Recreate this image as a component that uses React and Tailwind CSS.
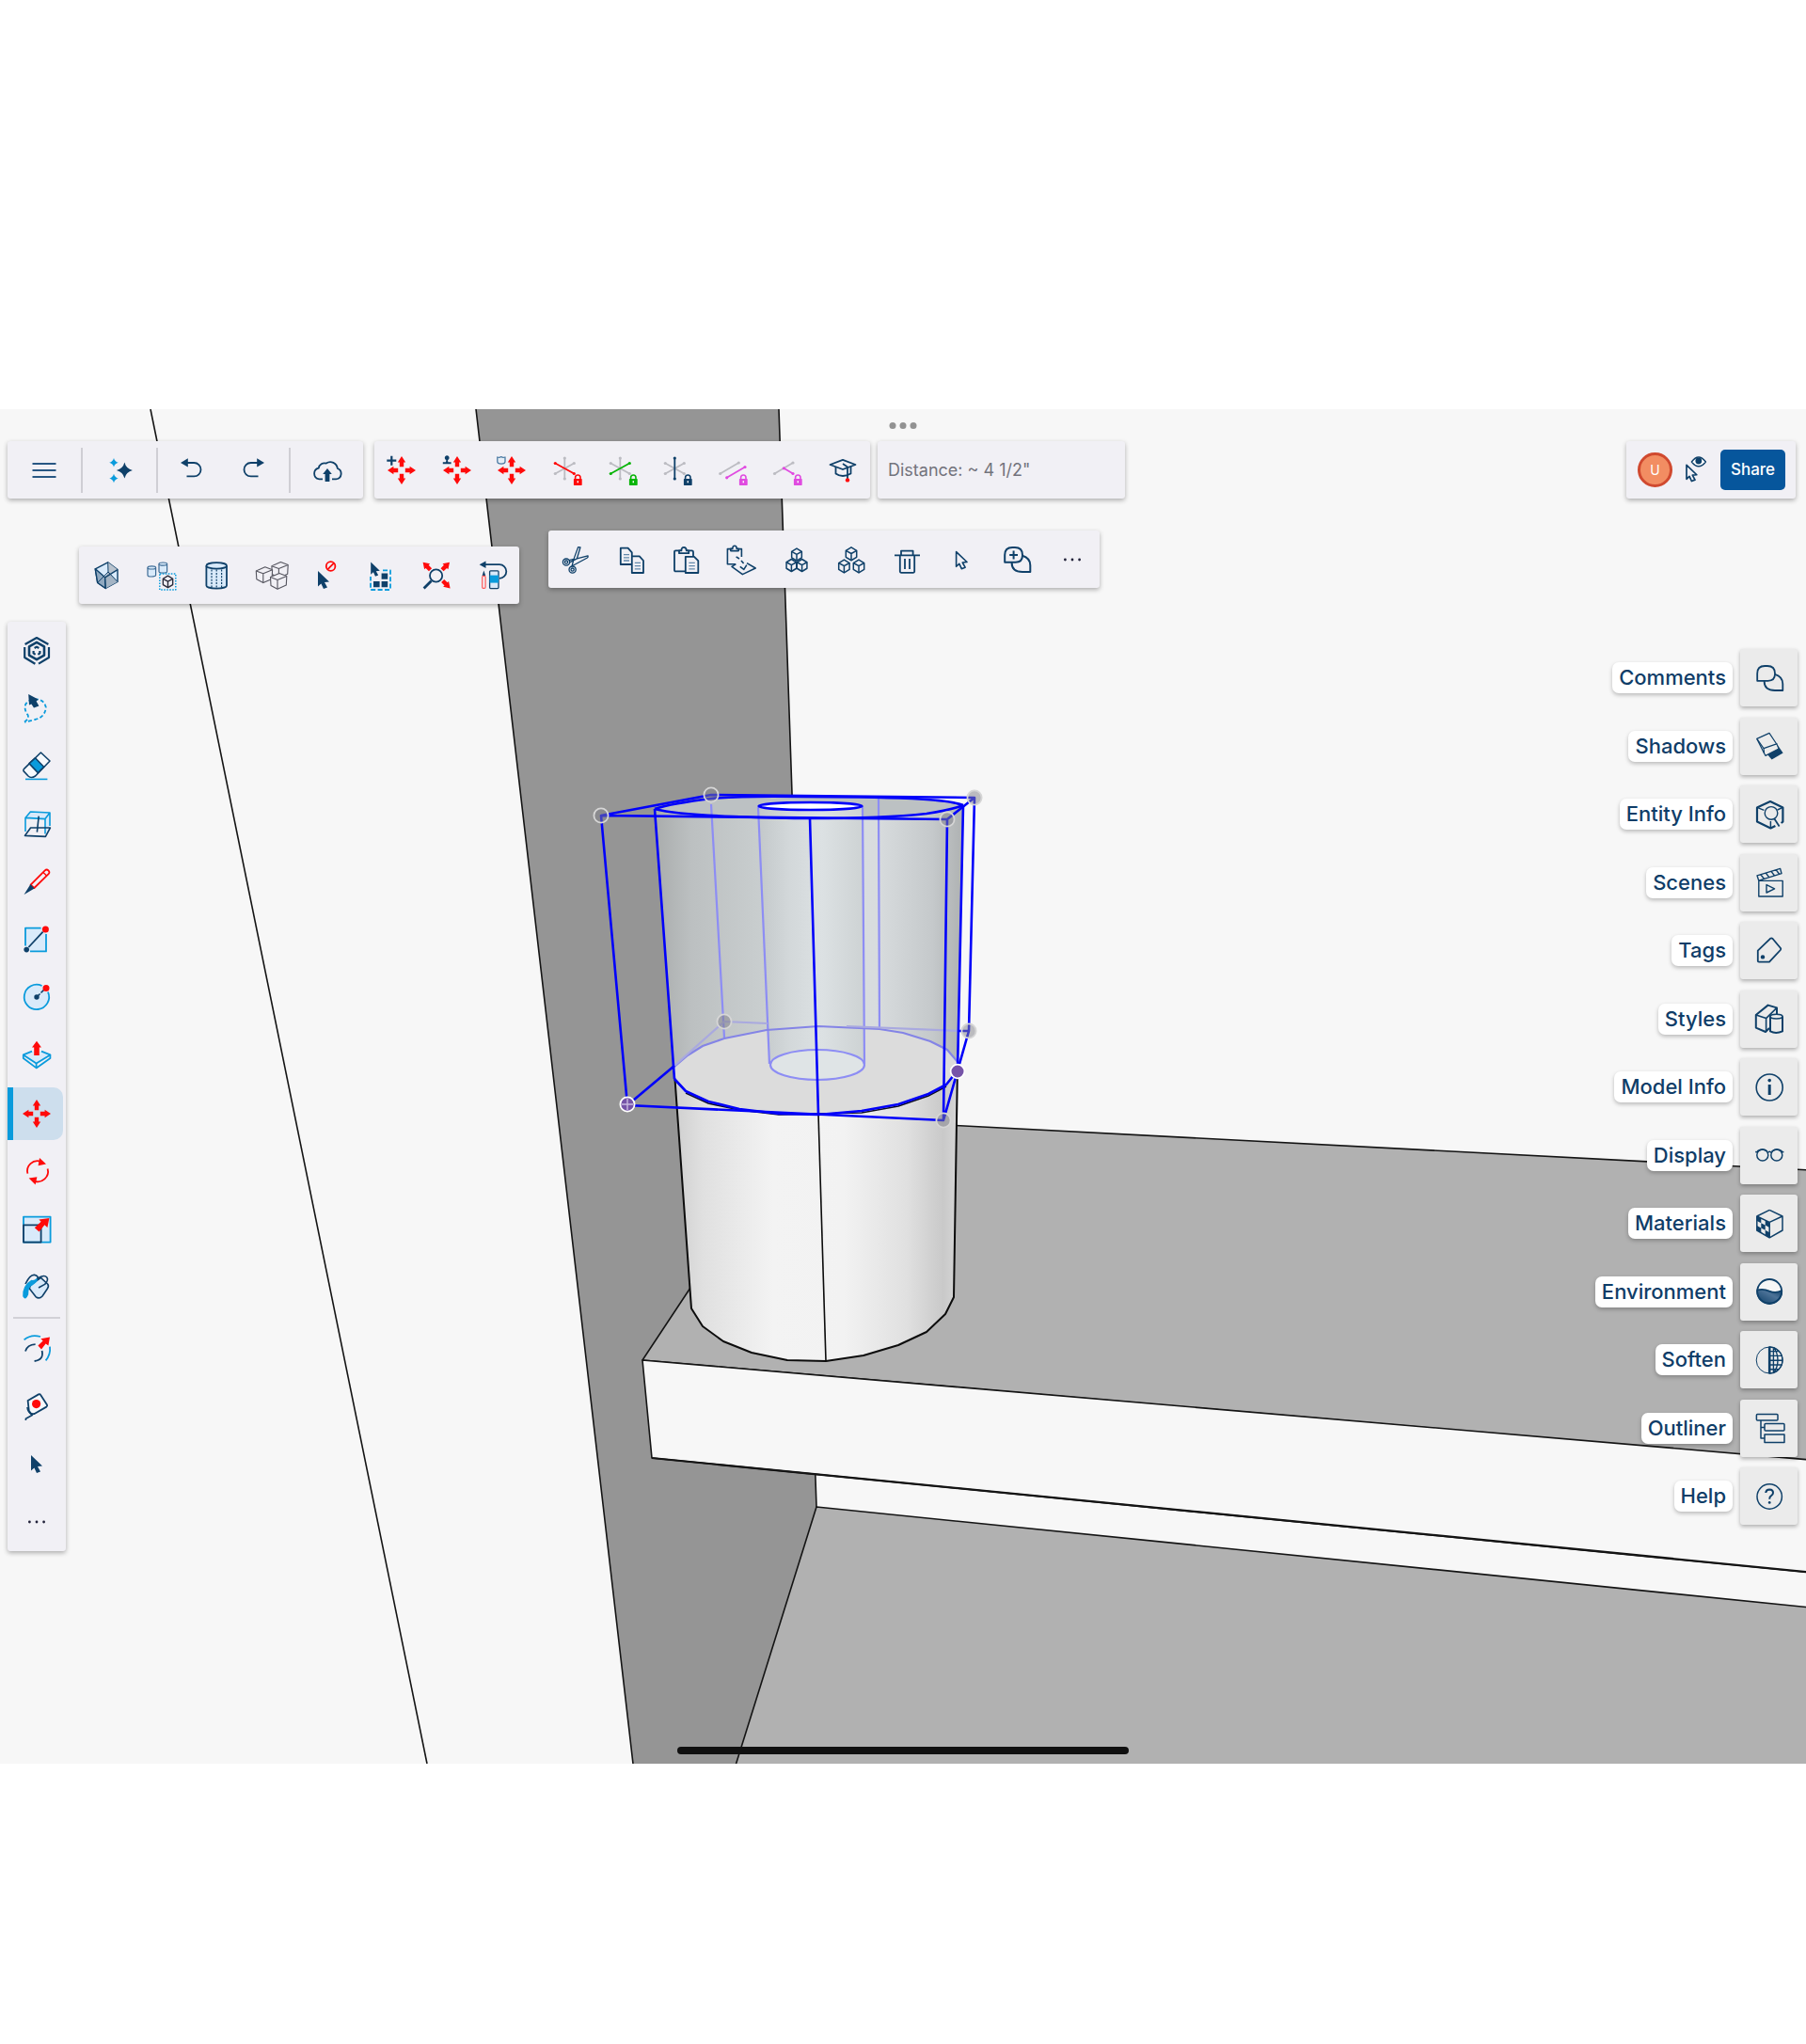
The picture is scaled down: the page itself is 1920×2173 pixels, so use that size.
import React, { useState } from 'react';

const NAVY = '#0f4069';
const BLUE = '#0a9bdc';
const PALE = '#d9eafa';
const RED = '#ff0a0a';
const GREEN = '#08b408';
const PINK = '#e04be0';
const GREY = '#bcbcc2';

function Icon({ children, stroke = NAVY, width = 1.8 }) {
  return (
    <svg
      viewBox="0 0 36 36"
      className="h-9 w-9 shrink-0 overflow-visible"
      fill="none"
      stroke={stroke}
      strokeWidth={width}
      strokeLinejoin="round"
      aria-hidden="true"
    >
      {children}
    </svg>
  );
}

// ---- small shared shapes ----

function Arrow({ x, y, angle, fill = RED }) {
  return (
    <path
      d="M0 0l4.2 6.4h-2v4.8h-4.4v-4.8h-2z"
      transform={`translate(${x} ${y}) rotate(${angle})`}
      fill={fill}
      stroke="none"
    />
  );
}

function MoveArrows() {
  return (
    <g>
      <Arrow x={18} y={3} angle={0} />
      <Arrow x={33} y={18} angle={90} />
      <Arrow x={18} y={33} angle={180} />
      <Arrow x={3} y={18} angle={270} />
    </g>
  );
}

function Star({ x, y, r, fill }) {
  return (
    <path
      d="M0 -1Q.2 -.2 1 0Q.2 .2 0 1Q-.2 .2 -1 0Q-.2 -.2 0 -1z"
      transform={`translate(${x} ${y}) scale(${r})`}
      fill={fill}
      stroke="none"
    />
  );
}

function Lock({ x = 29.3, y = 28.5, color }) {
  return (
    <g transform={`translate(${x} ${y})`}>
      <path d="M-2.7 -1V-2.8a2.7 2.7 0 0 1 5.4 0V-1" stroke={color} strokeWidth="1.6" />
      <rect x="-4.4" y="-1.4" width="8.8" height="6.8" rx=".6" fill={color} stroke="none" />
      <path d="M0 .8v2" stroke="#fff" strokeWidth="1.4" />
    </g>
  );
}

function Axis({ x1, y1, x2, y2, color }) {
  return (
    <g>
      <path d={`M${x1} ${y1}L${x2} ${y2}`} stroke={color} strokeWidth="1.8" />
      <circle cx={x1} cy={y1} r="1.6" fill={color} stroke="none" />
      <circle cx={x2} cy={y2} r="1.6" fill={color} stroke="none" />
    </g>
  );
}

const AXES = {
  red: { x1: 5.3, y1: 10.5, x2: 25.3, y2: 21.5, color: RED },
  green: { x1: 5.3, y1: 21.5, x2: 25.3, y2: 10.5, color: GREEN },
  blue: { x1: 15.3, y1: 5, x2: 15.3, y2: 27, color: NAVY },
};

function AxisLock({ active }) {
  const order = ['red', 'green', 'blue'].filter((a) => a !== active);
  return (
    <Icon>
      {order.map((a) => <Axis key={a} {...AXES[a]} color={GREY} />)}
      <Axis {...AXES[active]} />
      <Lock color={AXES[active].color} />
    </Icon>
  );
}

function Cube({ x, y, r, fill = 'none', stroke = NAVY, width = 1.5 }) {
  return (
    <g transform={`translate(${x} ${y}) scale(${r})`} stroke={stroke} strokeWidth={width / r} fill={fill}>
      <path d="M0 -1.12L.92 -.56V.56L0 1.12L-.92 .56V-.56z" />
      <path d="M-.92 -.56L0 -.05L.92 -.56M0 -.05V1.12" />
    </g>
  );
}

function WireCube({ x, y }) {
  return (
    <g transform={`translate(${x} ${y})`} fill="#f1f0f5" stroke="#55555f" strokeWidth="1.1">
      <path d="M-8.5 -4L1 -8.2L8.8 -5.2L8.3 4.5L-1 8.6L-8 4.8z" />
      <path d="M-8.5 -4L-1 -1.2L8.8 -5.2M-1 -1.2V8.6" />
    </g>
  );
}

function Cylinder({ x, y, w, h, ry, width = 1.2, stroke = '#3c6a94' }) {
  return (
    <g stroke={stroke} strokeWidth={width} fill={PALE}>
      <path d={`M${x} ${y}v${h}a${w / 2} ${ry} 0 0 0 ${w} 0v${-h}`} />
      <ellipse cx={x + w / 2} cy={y} rx={w / 2} ry={ry} />
    </g>
  );
}

function Cursor({ x, y, s = 1, fill = NAVY, width = 0 }) {
  return (
    <path
      d="M0 0L12 11.5L7 12L10 17.5L6 19L3.4 13.4L0 16.5z"
      transform={`translate(${x} ${y}) scale(${s})`}
      fill={fill}
      stroke={width ? NAVY : 'none'}
      strokeWidth={width}
    />
  );
}

function Dots() {
  return (
    <Icon>
      {[10.4, 18, 25.6].map((x) => <circle key={x} cx={x} cy="18" r="1.4" fill="#22223a" stroke="none" />)}
    </Icon>
  );
}

function CommentShapes() {
  return (
    <g>
      <path d="M24 13.8Q32.3 16.4 32.3 24V31H24Q12.6 31 12.6 21" />
      <path d="M5.2 20.8V13Q5.2 5 13.2 5H16Q24 5 24 13V13.6Q24 20.8 16.6 20.8z" />
    </g>
  );
}

// ---- toolbars ----

const fileTools = [
  { label: 'Menu', className: 'w-[78px]', icon: <Icon stroke="#285783" width={2}><path d="M5.5 11H30.5M5.5 18H30.5M5.5 25H30.5" /></Icon> },
  {
    label: 'Assistant',
    className: 'w-[80px] border-l-2',
    icon: (
      <Icon>
        <Star x={23.4} y={18} r={8.5} fill={NAVY} />
        <Star x={12} y={9.8} r={4.8} fill={BLUE} />
        <Star x={12} y={26.5} r={4.8} fill={BLUE} />
      </Icon>
    ),
  },
  {
    label: 'Undo',
    className: 'w-[71px] border-l-2',
    icon: (
      <Icon>
        <path d="M7 10L14.8 5.2V14.6z" fill={NAVY} stroke="none" />
        <path d="M14 10H21.3a7.2 7.2 0 0 1 0 14.4H13.5" />
      </Icon>
    ),
  },
  {
    label: 'Redo',
    className: 'w-[70px] pr-1',
    icon: (
      <Icon>
        <path d="M29 10L21.2 5.2V14.6z" fill={NAVY} stroke="none" />
        <path d="M22 10H14.7a7.2 7.2 0 0 0 0 14.4H22.5" />
      </Icon>
    ),
  },
  {
    label: 'Save to cloud',
    className: 'w-[79px] border-l-2',
    icon: (
      <Icon>
        <path d="M13 27.4H9.4A6 6 0 0 1 8.8 15.6A6.3 6.3 0 0 1 16.8 10.6A7.6 7.6 0 0 1 28.8 16A5.9 5.9 0 0 1 27.2 27.4H23" />
        <path d="M18 16l4.8 6h-2.4v8h-4.8v-8H13.2z" fill={NAVY} stroke="none" />
      </Icon>
    ),
  },
];

const moveTools = [
  { label: 'Move copy', icon: <Icon><MoveArrows /><path d="M7.3 2.7V12.7M2.3 7.7H12.3" strokeWidth="2.2" /></Icon> },
  {
    label: 'Stamp copies',
    icon: (
      <Icon>
        <MoveArrows />
        <path d="M2.8 9.3h8.8v2H2.8zM6 9.6L6.4 7A2.4 2.4 0 1 1 8 7l.4 2.6z" fill={NAVY} stroke="none" />
      </Icon>
    ),
  },
  {
    label: 'Move shape',
    icon: (
      <Icon>
        <MoveArrows />
        <path d="M2.8 4Q5 5 6.8 3.6Q8.6 5 11 4V8.5Q11 11 6.9 11.2Q2.8 11 2.8 8.5z" fill="#e6eef6" stroke="#4b7aa3" strokeWidth="1.3" />
      </Icon>
    ),
  },
  { label: 'Lock red axis', icon: <AxisLock active="red" /> },
  { label: 'Lock green axis', icon: <AxisLock active="green" /> },
  { label: 'Lock blue axis', icon: <AxisLock active="blue" /> },
  {
    label: 'Lock parallel',
    icon: (
      <Icon>
        <Axis x1={4.7} y1={21.5} x2={24.3} y2={10} color={GREY} />
        <Axis x1={11.7} y1={25.8} x2={31} y2={14.5} color={PINK} />
        <Lock color={PINK} />
      </Icon>
    ),
  },
  {
    label: 'Lock perpendicular',
    icon: (
      <Icon>
        <Axis x1={4.5} y1={21.5} x2={24} y2={10} color={GREY} />
        <Axis x1={14.3} y1={15.8} x2={24} y2={21.5} color={PINK} />
        <Lock color={PINK} />
      </Icon>
    ),
  },
  {
    label: 'Learn',
    icon: (
      <Icon>
        <path d="M10.5 14V21.5Q14 24 18 24Q22 24 26.5 21.5V14" />
        <path d="M4.5 12L18 6.8L31.5 12L18 17z" fill="#f1f0f5" />
        <path d="M18 11L23 14.4V27" />
        <circle cx="23" cy="28.4" r="2.2" fill={RED} stroke="none" />
      </Icon>
    ),
  },
];

const viewTools = [
  {
    label: 'X-ray',
    icon: (
      <Icon width={1.4}>
        <path d="M6.3 10.8L19.7 3.8L30 11.6V24.5L17.3 31.5L8.7 25.5z" fill={PALE} />
        <path d="M6.3 10.8L16.7 19.8L17.3 31.5L8.7 25.5z" fill="#90a8bf" />
        <path d="M19.7 3.8L30 11.6L16.7 19.8L20 14z" fill="#b9c3ce" stroke="none" />
        <path d="M20 14L30 24.5L17.3 31.5L16.8 21z" fill="#a4b4c4" stroke="none" />
        <path d="M16.7 19.8L30 11.6M16.7 19.8L17.3 31.5" />
        <path d="M19.7 3.8L20 14M20 14L30 24.5M20 14L8.7 25.5" strokeWidth="1" />
      </Icon>
    ),
  },
  {
    label: 'Select similar',
    icon: (
      <Icon>
        <Cylinder x={3} y={9.4} w={8.6} h={8} ry={1.6} />
        <Cylinder x={15} y={5.6} w={8.6} h={8} ry={1.6} />
        <rect x="15.8" y="16" width="17" height="17" stroke={BLUE} strokeDasharray="1.6 1.4" strokeWidth="1.5" />
        <Cube x={24.5} y={24.4} r={5.6} stroke="#2a2a3a" width={1.4} fill="#f1f0f5" />
      </Icon>
    ),
  },
  {
    label: 'Hidden geometry',
    icon: (
      <Icon>
        <Cylinder x={7.4} y={7.4} w={21.6} h={21} ry={3.2} width={1.8} stroke={NAVY} />
        <path d="M13 11.5V31M18.2 11.5V31M23.6 11.5V31" strokeWidth="1.2" strokeDasharray="2 1.4" />
      </Icon>
    ),
  },
  {
    label: 'Hide rest of model',
    icon: (
      <Icon>
        <WireCube x={26.4} y={11.8} />
        <WireCube x={9.8} y={17} />
        <WireCube x={25} y={23.6} />
      </Icon>
    ),
  },
  {
    label: 'Deselect',
    icon: (
      <Icon>
        <Cursor x={9} y={13} />
        <circle cx="22.6" cy="8" r="4.8" stroke={RED} strokeWidth="1.8" />
        <path d="M19.3 11.3L26 4.7" stroke={RED} />
      </Icon>
    ),
  },
  {
    label: 'Select all',
    icon: (
      <Icon>
        <path d="M19 12.4H27V33H6V19" stroke={BLUE} strokeWidth="1.8" strokeDasharray="5 2.4" />
        <path d="M17.6 15.6h6.6v6.2h-6.6zM9 24h6.6v6.2H9zM17.6 24h6.6v6.2h-6.6z" fill={NAVY} stroke="none" />
        <Cursor x={6.2} y={3.6} s={0.8} />
      </Icon>
    ),
  },
  {
    label: 'Zoom extents',
    icon: (
      <Icon>
        <circle cx="17.6" cy="18" r="6.6" />
        <path d="M12.6 23.4L4.6 31.5" strokeWidth="2.8" />
        <Arrow x={3.6} y={3.8} angle={-45} />
        <Arrow x={32} y={3.8} angle={45} />
        <Arrow x={32.6} y={31.4} angle={135} />
      </Icon>
    ),
  },
  {
    label: 'Undo draw',
    icon: (
      <Icon>
        <path d="M4.6 6.2L11.5 2.4V10z" fill={NAVY} stroke="none" />
        <path d="M10 6.2H26a7.3 7.3 0 0 1 0 14.6" />
        <path d="M9.4 12.5L7.6 18H11.2z" fill={NAVY} stroke="none" />
        <rect x="7.7" y="18.4" width="3.4" height="13" rx="1.2" stroke="#ff5a5a" strokeWidth="1.2" />
        <rect x="15.6" y="12.8" width="9.4" height="18.8" rx="1" fill={PALE} strokeWidth="1.3" />
        <path d="M15.6 17.6h9.4v8h-9.4z" fill={BLUE} stroke="none" />
      </Icon>
    ),
  },
];

const editTools = [
  {
    label: 'Cut',
    icon: (
      <Icon width={1.3}>
        <circle cx="8" cy="20.6" r="3.6" />
        <circle cx="14.6" cy="28.6" r="3.6" />
        <circle cx="8" cy="20.6" r="1.6" />
        <circle cx="14.6" cy="28.6" r="1.6" />
        <path d="M11 18.6L16 17.4L20.6 4.6L23 4.8L19.4 16.8L31 13.8Q31.6 15.4 30.4 16L14.2 24.8M11.6 20.8L19.4 16.8M14 25L16 17.4" />
      </Icon>
    ),
  },
  {
    label: 'Copy',
    icon: (
      <Icon>
        <path d="M18 23H6.8V5.7H14.6L18.8 10.4V14" />
        <path d="M18.8 14.4H26.8L31 19V32H18.8z" />
        <path d="M10 12.6H16M10 15.8H16M10 19H16M21.8 21.4H28M21.8 24.6H28M21.8 27.8H28" stroke="#6389ac" strokeWidth="1.3" />
      </Icon>
    ),
  },
  {
    label: 'Paste',
    icon: (
      <Icon>
        <path d="M17 30.4H7.4Q6 30.4 6 29V9.8Q6 8.4 7.4 8.4H24.4Q26 8.4 26 9.8V14" />
        <path d="M11 11.2V8.4H13.4Q13.4 4.8 16 4.8Q18.8 4.8 18.8 8.4H21.2V11.2z" fill="#f1f0f5" />
        <path d="M17.8 14.8H27L31.3 19.2V32H17.8z" />
        <path d="M21.4 21.4H27.8M21.4 24.6H27.8M21.4 27.8H27.8" stroke="#6389ac" strokeWidth="1.3" />
      </Icon>
    ),
  },
  {
    label: 'Paste in place',
    icon: (
      <Icon width={1.6}>
        <path d="M12 22.8H3.4V6.6H18.4V15" />
        <path d="M6.8 8.6V6.4H8.8Q8.8 3.2 11 3.2Q13.2 3.2 13.2 6.4H15.2V8.6z" fill="#f1f0f5" />
        <path d="M12.4 22.6L8 25.4L19.4 33.6L33.2 27L24 21.6" />
        <path d="M12.6 14.8L16 17M18 19L20.6 22M16.8 25.4L20.8 28.4L23.8 23.6" />
      </Icon>
    ),
  },
  { label: 'Make group', icon: <Icon><Cube x={18} y={12.6} r={5.8} /><Cube x={12.4} y={24} r={5.8} /><Cube x={23.6} y={24} r={5.8} /></Icon> },
  { label: 'Explode', icon: <Icon><Cube x={18} y={11.8} r={6.2} /><Cube x={10.4} y={25} r={6.2} /><Cube x={26} y={25} r={6.2} /></Icon> },
  {
    label: 'Delete',
    icon: (
      <Icon>
        <path d="M5 13.4H32M12 13V8.6H24.6V13M10.8 13.6V30.6Q10.8 31.8 12 31.8H25Q26.2 31.8 26.2 30.6V13.6M16 17V28M21 17V28" />
      </Icon>
    ),
  },
  { label: 'Select', icon: <Icon><Cursor x={12.6} y={9.6} s={0.95} fill="none" width={1.7} /></Icon> },
  { label: 'Add comment', icon: <Icon width={2}><CommentShapes /><path d="M14.6 8.6V17.4M10.2 13H19" /></Icon> },
  { label: 'More edit tools', icon: <Dots /> },
];

const drawTools = [
  {
    label: 'Home',
    icon: (
      <Icon>
        <path d="M5.6 11L18 4L30.4 11M31 14V25L20 31.6M16.4 31.8L5.2 25V14" strokeWidth="2.2" />
        <path d="M18 8.8L26 13.4V22.6L18 27.2L10 22.6V13.4z" strokeWidth="2.6" />
        <path d="M15.6 15L18 13.6L20.4 15M14.6 18V20.4L16.6 21.8M21.4 18V20.4L19.4 21.8" strokeWidth="2.2" />
      </Icon>
    ),
  },
  {
    label: 'Lasso',
    icon: (
      <Icon>
        <path d="M5 32.6Q10 29 8.6 25Q4 19 6.4 13.4Q10 8.4 17 8.4Q26 8.6 27.8 17Q27 27.6 16 30Q10 31.6 5 32.6" stroke={BLUE} strokeDasharray="4 2.4" />
        <path d="M9.2 3L19.6 8.4L17.6 10.4L20.4 15.6L15 17.6L12.4 13.4L10 14.6z" fill={NAVY} stroke="none" />
      </Icon>
    ),
  },
  {
    label: 'Eraser',
    icon: (
      <Icon width={1.6}>
        <path d="M22.4 3L32 12L16.6 28Q12 31 9 28L4 22.6Q3.6 21 4.6 20.4z" fill="#f5f9fd" />
        <path d="M10 14.6L16.4 8.8L25.6 18.2L19.4 24.6z" fill={BLUE} />
        <path d="M6 31.4H29.4" stroke={BLUE} />
      </Icon>
    ),
  },
  {
    label: 'Section plane',
    icon: (
      <Icon width={1.6}>
        <path d="M6 11.4L11.4 5L32 6V19L27 28V12.6z" fill={PALE} stroke="none" />
        <path d="M6 26V11.4L27 12.6V28.4M6 11.4L11.4 5L32 6L27 12.6M32 6V20" stroke={BLUE} />
        <path d="M5.4 30.4L11.6 22H32.4L27.4 31.4zM18.4 26.6L20.2 9.6" />
      </Icon>
    ),
  },
  {
    label: 'Line',
    icon: (
      <Icon>
        <path d="M11.6 20.6L26.8 5.4Q28.6 3.6 30.4 5.4Q32.4 7.4 30.6 9.2L15.4 24z" stroke={RED} />
        <path d="M25 7.4L28.6 11" stroke={RED} strokeWidth="1.4" />
        <path d="M4.6 31L11.4 20L15.6 24.4z" fill={NAVY} stroke="none" />
      </Icon>
    ),
  },
  {
    label: 'Rectangle',
    icon: (
      <Icon>
        <path d="M6 5.6H28V30.4H6z" fill={PALE} stroke="none" />
        <path d="M22.6 5.6H6V24.6M28 12V30.4H11" stroke={BLUE} />
        <path d="M9.4 26L24.6 9.6" />
        <circle cx="7.2" cy="28.6" r="2.8" fill={NAVY} stroke="none" />
        <circle cx="27.4" cy="7" r="3.5" fill={RED} stroke="none" />
      </Icon>
    ),
  },
  {
    label: 'Circle',
    icon: (
      <Icon>
        <circle cx="18" cy="17" r="13.2" fill={PALE} stroke="none" />
        <path d="M23.6 5A13.2 13.2 0 1 0 30 11.6" stroke={BLUE} />
        <path d="M18 17L25.6 9.4" strokeDasharray="5 1.4" strokeWidth="1.5" />
        <circle cx="18" cy="17" r="2.7" fill={NAVY} stroke="none" />
        <circle cx="28" cy="7.4" r="3.5" fill={RED} stroke="none" />
      </Icon>
    ),
  },
  {
    label: 'Push/Pull',
    icon: (
      <Icon>
        <path d="M13 13.6L3.8 17.4L17.6 26.6L32.4 17.4L23 13.6" fill={PALE} stroke={BLUE} />
        <path d="M3.8 17.4V21L17.6 31.4L32.4 21V17.4M17.6 26.6V31" stroke={BLUE} />
        <path d="M18 2.8L23 9.4H20.8V18H15.2V9.4H13z" fill={RED} stroke="none" />
      </Icon>
    ),
  },
  { label: 'Move', icon: <Icon><MoveArrows /></Icon> },
  {
    label: 'Rotate',
    icon: (
      <Icon>
        <path d="M8.4 20.6A10.8 10.8 0 0 1 22 7.6M29.6 15.6A10.8 10.8 0 0 1 15.4 28.6" stroke={RED} strokeWidth="1.8" />
        <path d="M21 4L28 10.6L19.6 12.2zM16.6 32.4L9.6 25.6L18.4 24.2z" fill={RED} stroke="none" />
      </Icon>
    ),
  },
  {
    label: 'Scale',
    icon: (
      <Icon>
        <path d="M4 4.6H32.6V31.6H4z" stroke={BLUE} fill={PALE} />
        <path d="M4 13.4H22.6V31.6H4z" />
        <path d="M31.4 6L29.4 16L26.4 13.2L20.6 20.6L15.8 16.2L22.6 9.8L20.4 7.6z" fill={RED} stroke="none" />
      </Icon>
    ),
  },
  {
    label: 'Paint bucket',
    icon: (
      <Icon width={1.6}>
        <path d="M14.4 14L22.4 8.4L29.6 15Q31.4 17 29.4 20L24 28Q20.6 31.6 17 28.6L10.4 20Q10.6 16 14.4 14z" fill={PALE} />
        <path d="M13.6 15.4Q8 17 8.4 26Q6 32 4 28Q3.4 17 12.4 11.6Q16 12.4 18.4 9.4Q18.4 12 13.6 15.4z" fill={BLUE} stroke={BLUE} />
        <path d="M6 15Q11 4.8 15.6 5.4Q20 6 19.4 10.6M18.4 9.4Q26 4.4 28.8 8Q31 11 26.6 15.4L20 19" />
      </Icon>
    ),
  },
];

const moreTools = [
  {
    label: 'Offset',
    icon: (
      <Icon>
        <path d="M4.6 8.4Q12 2 22 5M32 15.6Q33 24 27.6 30.4" stroke={BLUE} />
        <path d="M6 20.6Q8 13.6 16.6 13.2M23.6 20Q26 29.6 15.6 31" />
        <path d="M32 5.4L30.4 14.6L27.6 12.4L23 18.6L19.4 14.6L24.6 9.6L22.4 7.2z" fill={RED} stroke="none" />
      </Icon>
    ),
  },
  {
    label: 'Tape measure',
    icon: (
      <Icon>
        <path d="M8.6 12L20 5.4Q21.4 4.6 22.2 6L29 16.4Q29.6 17.8 28.4 18.6L15.6 26Q11.4 26.6 9.8 22.8z" fill="#f6f8fb" />
        <path d="M8 19Q8.4 24 13 27.2M14 27L6.4 31.2V33" strokeWidth="1.6" />
        <circle cx="17.6" cy="15.6" r="4.6" fill={RED} stroke="none" />
      </Icon>
    ),
  },
  { label: 'Select', icon: <Icon><Cursor x={12} y={8} /></Icon> },
  { label: 'More tools', icon: <Dots /> },
];

const panels = [
  { label: 'Comments', icon: <Icon><CommentShapes /></Icon> },
  {
    label: 'Shadows',
    icon: (
      <Icon width={1.2}>
        <path d="M14.6 25.4L27.4 18L32.6 25.4L20.6 32.4z" fill={NAVY} stroke="none" />
        <path d="M4.8 10.4L18 4.4L26.4 17L28 21L14 28.4L12.6 26z" fill="#ececec" />
        <path d="M12.6 26L12 20.6L26.4 15.6M4.8 10.4L12 20.6" />
      </Icon>
    ),
  },
  {
    label: 'Entity Info',
    icon: (
      <Icon width={2.2}>
        <path d="M30.6 27L32.4 25.6V10.4L19 4L5 10.4V25.4L19.4 32.4L24.4 30" />
        <path d="M5 10.4L12.4 13.4M32.4 10.4L26.6 13M19.4 32.4V25" strokeWidth="1.5" />
        <circle cx="20" cy="16.4" r="6.8" fill="#ebebeb" strokeWidth="1.4" />
        <path d="M23.4 22.6L28.6 30.4" strokeWidth="1.8" />
      </Icon>
    ),
  },
  {
    label: 'Scenes',
    icon: (
      <Icon width={1.4}>
        <path d="M6.8 16.4H32.2V33H6.8zM6.8 16.4L5 10.8L29.6 3.4L31 8.6L6.8 16.2M9 10L12.4 14.2M14.4 8.2L17.8 12.6M20 6.4L23.4 10.8M25.2 4.8L28.6 9.2M15 20.6V29L23.6 24.8z" />
      </Icon>
    ),
  },
  {
    label: 'Tags',
    icon: (
      <Icon>
        <path d="M5.8 17.6L19 4.8Q20.4 3.8 21.6 5L30 15Q30.6 16 29.8 17L18 29.6H7Q5.8 29.6 5.8 28.4z" />
        <circle cx="11" cy="24.4" r="2.2" fill={NAVY} stroke="none" />
      </Icon>
    ),
  },
  {
    label: 'Styles',
    icon: (
      <Icon width={2}>
        <path d="M18 28L14 32L3.8 27.6V14L16.6 3.6L26 6.4V13" />
        <path d="M3.8 14L14.6 17.6L26 6.4M14.6 17.6V31" strokeWidth="1.6" />
        <path d="M19 15.6V31.4Q25 34.4 32 31.4V15.6" fill="#ebebeb" />
        <ellipse cx="25.5" cy="15.6" rx="6.5" ry="2.4" fill="#ebebeb" strokeWidth="1.6" />
      </Icon>
    ),
  },
  {
    label: 'Model Info',
    icon: (
      <Icon width={1.6}>
        <circle cx="18.2" cy="18" r="14" />
        <path d="M18.2 15V26" strokeWidth="3" />
        <circle cx="18.2" cy="10.6" r="1.8" fill={NAVY} stroke="none" />
      </Icon>
    ),
  },
  {
    label: 'Display',
    icon: (
      <Icon width={1.5}>
        <circle cx="10.8" cy="18" r="6" />
        <circle cx="25.8" cy="18" r="6" />
        <path d="M16.4 15.6Q18.3 13 20.2 15.6M3.2 14.4L5.8 15M33.4 14.4L30.8 15M5 13.8Q11 10 16 14M20.6 14Q26 10 31.6 13.8" />
      </Icon>
    ),
  },
  {
    label: 'Materials',
    icon: (
      <Icon width={1.5}>
        <path d="M18.2 3.4L32 10V25L18.2 32.8L4.8 25V10L18.2 16.4L32 10M4.8 10L18.2 3.4M18.2 16.4V32.8" />
        <path d="M4.8 10L9.3 12.2V17.2L4.8 15zM13.7 14.3L18.2 16.4V22L13.7 19.6zM9.3 17.2L13.7 19.6V24.8L9.3 22.4zM4.8 20L9.3 22.4V27.6L4.8 25zM13.7 24.8L18.2 27.2V32.8L13.7 30z" fill={NAVY} stroke="none" />
      </Icon>
    ),
  },
  {
    label: 'Environment',
    icon: (
      <Icon>
        <defs>
          <linearGradient id="water" x1="0" y1="1" x2="1" y2="0">
            <stop offset="0" stopColor={NAVY} />
            <stop offset=".6" stopColor="#4c7297" />
            <stop offset="1" stopColor={NAVY} />
          </linearGradient>
        </defs>
        <circle cx="18.2" cy="18" r="13" fill="#f6f6f6" />
        <path d="M5.2 16.4Q12 14.8 18 17.6Q25 20.4 31.2 17A13 13 0 0 1 5.2 18z" fill="url(#water)" />
      </Icon>
    ),
  },
  {
    label: 'Soften',
    icon: (
      <Icon width={1}>
        <circle cx="18.2" cy="18" r="14" />
        <path d="M18.2 3.6V32.4" strokeWidth="2.6" />
        <path d="M18 4A14 14 0 0 1 18 32M22.4 4.4V31.6Q27 26 27 18Q27 10 22.4 4.4M19 8.6H28.6M19 13.4H31.4M19 18.2H32M19 23H31.4M19 27.8H28.4" strokeWidth="1.4" />
      </Icon>
    ),
  },
  {
    label: 'Outliner',
    icon: (
      <Icon width={1.5}>
        <rect x="4.4" y="3.4" width="22.6" height="6.6" rx="1" />
        <rect x="13" y="13.4" width="21" height="7.6" rx="1" />
        <path d="M13 25H34V33.4H13zM9 10V29H13M9 17.4H13" />
      </Icon>
    ),
  },
  {
    label: 'Help',
    icon: (
      <Icon width={1.5}>
        <circle cx="18.2" cy="18" r="13.2" />
        <path d="M14.2 14Q14.6 10.6 18.2 10.6Q22 10.8 22 14Q22 16 20 17.2Q18.2 18.2 18.2 20.8" strokeWidth="2" />
        <circle cx="18.2" cy="24.4" r="1.4" fill={NAVY} stroke="none" />
      </Icon>
    ),
  },
];

const barLook = 'h-[61px] rounded-[3px] bg-[#f1f0f5] shadow-[0_2px_5px_rgba(0,0,0,0.3)]';

function Toolbar({ label, tools, className }) {
  return (
    <div role="toolbar" aria-label={label} className={`flex items-stretch ${barLook} ${className}`}>
      {tools.map((tool) => (
        <button key={tool.label} type="button" aria-label={tool.label} className="flex flex-1 items-center justify-center">
          {tool.icon}
        </button>
      ))}
    </div>
  );
}

function FileBar() {
  return (
    <div role="toolbar" aria-label="File" className={`flex items-center ${barLook}`}>
      {fileTools.map((tool) => (
        <button
          key={tool.label}
          type="button"
          aria-label={tool.label}
          className={`flex h-12 items-center justify-center border-[#cfced4] ${tool.className}`}
        >
          {tool.icon}
        </button>
      ))}
    </div>
  );
}

function ToolButton({ tool, active, onPick }) {
  return (
    <button
      type="button"
      aria-label={tool.label}
      aria-pressed={active}
      onClick={() => onPick(tool.label)}
      className="flex items-center"
    >
      <span
        className={`mr-[3px] flex h-14 flex-1 items-center justify-center border-l-6 pr-[3px] ${
          active ? 'rounded-r-[10px] border-[#0a9bdc] bg-[#cddeed]' : 'border-transparent'
        }`}
      >
        {tool.icon}
      </span>
    </button>
  );
}

function SideBar() {
  const [current, setCurrent] = useState('Move');
  return (
    <div
      role="toolbar"
      aria-label="Drawing tools"
      className="flex w-[62px] flex-col rounded-[3px] bg-[#f1f0f5] shadow-[0_2px_5px_rgba(0,0,0,0.3)]"
    >
      <div className="grid h-[738px] auto-rows-fr">
        {drawTools.map((t) => <ToolButton key={t.label} tool={t} active={t.label === current} onPick={setCurrent} />)}
      </div>
      <div className="mx-[6px] my-px h-[2px] bg-[#d2d1d7]" />
      <div className="grid h-[246px] auto-rows-fr">
        {moreTools.map((t) => <ToolButton key={t.label} tool={t} active={t.label === current} onPick={setCurrent} />)}
      </div>
    </div>
  );
}

function PanelList() {
  return (
    <ul className="mt-[29px] flex h-[931px] flex-col justify-between">
      {panels.map((panel) => (
        <li key={panel.label}>
          <button type="button" className="flex w-full items-center justify-end gap-2">
            <span className="rounded-[7px] bg-white px-[7px] text-[22px] leading-[33px] font-medium text-[#0f3d68] shadow-[0_2px_4px_rgba(0,0,0,0.25)]">
              {panel.label}
            </span>
            <span className="flex h-[61px] w-[61px] items-center justify-center rounded-[3px] bg-[#ebebeb] shadow-[0_2px_4px_rgba(0,0,0,0.3)]">
              {panel.icon}
            </span>
          </button>
        </li>
      ))}
    </ul>
  );
}

function AccountBar() {
  return (
    <div className={`ml-auto flex w-[180px] items-center pr-[11px] pl-3 ${barLook}`}>
      <button
        type="button"
        aria-label="Account"
        className="flex h-[37px] w-[37px] items-center justify-center rounded-full border-[3px] border-[#d0492f] bg-[#f28d62] text-[14px] text-white"
      >
        U
      </button>
      <button type="button" aria-label="Viewer mode" className="flex flex-1 justify-center">
        <Icon width={1.7}>
          <Cursor x={7} y={12.4} s={0.9} fill="none" width={1.9} />
          <path d="M12.4 9Q19.8 -1 27.4 9Q19.8 18.6 12.4 9z" fill="#fff" strokeWidth="1.4" />
          <circle cx="19.8" cy="8" r="3.4" fill={NAVY} stroke="none" />
        </Icon>
      </button>
      <button type="button" className="h-[43px] w-[69px] rounded-[5px] bg-[#06569c] text-[17px] font-medium text-white">
        Share
      </button>
    </div>
  );
}

// ---- 3D model ----

const handles = [
  [639, 867], [756, 845], [1036, 848], [1007, 871], [770, 1086], [1030, 1096], [1003, 1191],
];

const RIM_FRONT = 'M696 860Q720 866 780 868Q830 870 861 870Q940 870 985 865Q1012 861 1024 856';
const RIM_BACK = 'M1024 856Q1010 851 970 849Q920 847 850 847Q790 846 756 849Q715 854 696 860';
const RING_FRONT = 'M717 1147L729 1160L753 1171L786 1179L828 1184L870 1185L916 1181L955 1174L987 1163L1006 1153L1018 1138';
const RING_BACK = 'M717 1134L731 1122L747 1112L770 1104L815 1095L870 1091L935 1094L960 1098L989 1107L1007 1116L1019 1130';

function Scene() {
  return (
    <svg
      viewBox="0 435 1920 1440"
      preserveAspectRatio="xMidYMid slice"
      className="absolute inset-0 h-full w-full"
      role="img"
      aria-label="3D model"
    >
      <defs>
        <linearGradient id="solid">
          <stop offset="0" stopColor="#cfcfcf" />
          <stop offset=".1" stopColor="#e0e0e0" />
          <stop offset=".35" stopColor="#f3f3f3" />
          <stop offset=".6" stopColor="#f2f2f2" />
          <stop offset=".82" stopColor="#e0e0e0" />
          <stop offset=".95" stopColor="#c9c9c9" />
          <stop offset="1" stopColor="#d6d6d6" />
        </linearGradient>
        <linearGradient id="glass">
          <stop offset="0" stopColor="#a9acac" />
          <stop offset=".12" stopColor="#bcc0c1" />
          <stop offset=".35" stopColor="#c9cecf" />
          <stop offset=".55" stopColor="#d8dde0" />
          <stop offset=".72" stopColor="#d8dcde" />
          <stop offset=".9" stopColor="#c5c9cb" />
          <stop offset="1" stopColor="#aeb1b2" />
        </linearGradient>
        <linearGradient id="tube">
          <stop offset="0" stopColor="#c3c8ca" />
          <stop offset=".3" stopColor="#d3d8da" />
          <stop offset=".6" stopColor="#dce1e3" />
          <stop offset="1" stopColor="#cdd2d3" />
        </linearGradient>
      </defs>

      <rect y="435" width="1920" height="1440" fill="#f7f7f7" />
      <g stroke="#141414" strokeWidth="1.6" strokeLinejoin="round">
        <path d="M160 435L454 1875" fill="none" />
        <path d="M506 435H828L868 1602L783 1875H673z" fill="#959595" stroke="none" />
        <path d="M506 435L673 1875M828 435L868 1602" fill="none" />
        <path d="M868 1602L1925 1709V1880H781z" fill="#b1b1b1" />
        <path d="M854 1188L1925 1244V1553L683 1446z" fill="#b1b1b1" />
        <path d="M683 1446L1925 1552V1672L693 1550z" fill="#f7f7f7" />
        <path d="M693 1550L1920 1671" strokeWidth="2.2" />
      </g>

      {/* solid cylinder */}
      <path
        d="M717 1140L735 1391L747 1410L769 1426L799 1438L837 1446L878 1447L918 1441L955 1430L985 1416L1005 1397L1014 1379L1018 1130z"
        fill="url(#solid)"
        stroke="#0c0c0c"
        strokeWidth="2"
        strokeLinejoin="round"
      />
      <path d="M870 1184L878 1447" stroke="#0c0c0c" strokeWidth="1.6" />

      {/* glass cylinder */}
      <path d={`${RIM_FRONT}L1019 1130L1018 1138L1006 1153L987 1163L955 1174L916 1181L870 1185L828 1184L786 1179L753 1171L729 1160L717 1147z`} fill="url(#glass)" />
      <path d={`${RING_FRONT}L1019 1130L1007 1116L989 1107L960 1098L935 1094L870 1091L815 1095L770 1104L747 1112L731 1122L717 1134z`} fill="#dcdcdc" />
      <path d={`${RIM_FRONT}${RIM_BACK.replace('M', 'L')}z`} fill="#bcc1c3" />
      <path d="M806 858L818 1131Q822 1148 869 1148Q916 1146 919 1130L917 857z" fill="url(#tube)" />
      <path d="M819 1132a50 16 0 0 1 100 0a50 16 0 0 1 -100 0z" fill="#dfe4e6" />
      <ellipse cx="861.5" cy="857" rx="55" ry="4.5" fill="#fff" />

      {/* edges seen through the glass */}
      <g fill="none" stroke="#8d8df4" strokeWidth="2.2">
        <path d="M756 855L770 1103M934 848L935 1094M806 858L818 1131M917 857L919 1131" />
        <path d={RING_BACK} stroke="#8484e6" />
        <path d="M819 1132a50 16 0 0 1 100 0a50 16 0 0 1 -100 0z" />
        <path d="M717 1133L770 1086L816 1088M900 1091L1019 1096" stroke="#a9a9df" />
      </g>

      <path d="M729 1162L753 1173L786 1180L828 1185L916 1183L955 1176L987 1165L1006 1155" fill="none" stroke="#0c0c20" strokeWidth="1.6" />
      <g fill="none" stroke="#0000fa" strokeWidth="2.6" strokeLinejoin="round">
        <path d="M639 867L756 845L1036 848L1007 871L639 867L667 1175L1003 1191L1007 871M1036 848L1030 1096L1003 1191" />
        <path d="M667 1175L717 1133M1019 1096H1030" />
        <path d="M696 860L717 1147M1024 856L1018 1138M861 870L870 1184" />
        <path d={RIM_FRONT} />
        <path d={RIM_BACK} />
        <path d={RING_FRONT} />
        <ellipse cx="861.5" cy="857" rx="55" ry="4" />
      </g>

      {handles.map(([x, y]) => (
        <circle key={`${x}-${y}`} cx={x} cy={y} r="7.6" fill="#80808880" stroke="#d6d6d6" strokeWidth="1.8" />
      ))}
      <circle cx="1018" cy="1139" r="7.4" fill="#7654a8" stroke="#fff" strokeWidth="1.8" />
      <circle cx="667" cy="1174" r="7.6" fill="#7654a8" stroke="#fff" strokeWidth="1.8" />
      <path d="M667 1168V1180M661 1174H673" stroke="#c8badf" strokeWidth="1.4" />
    </svg>
  );
}

export default function App() {
  return (
    <main className="min-h-screen bg-white pt-[435px] pb-[298px] font-['Inter',sans-serif]">
      <section className="relative flex aspect-[4/3] w-full flex-col overflow-hidden">
        <Scene />

        <button type="button" aria-label="Window controls" className="absolute top-[14px] left-1/2 flex -translate-x-1/2 gap-1">
          <span className="h-[7px] w-[7px] rounded-full bg-[#929292]" />
          <span className="h-[7px] w-[7px] rounded-full bg-[#929292]" />
          <span className="h-[7px] w-[7px] rounded-full bg-[#929292]" />
        </button>

        <header className="relative flex items-start pt-[34px] pr-[11px] pl-2">
          <FileBar />
          <Toolbar label="Move options" tools={moveTools} className="ml-3 w-[527px]" />
          <input
            type="text"
            aria-label="Measurement"
            defaultValue={'Distance: ~ 4 1/2"'}
            className={`ml-2 w-[263px] px-[11px] text-[18px] text-[#73737c] outline-none ${barLook}`}
          />
          <AccountBar />
        </header>

        <div className="relative mt-[34px] flex items-start pl-[84px]">
          <Toolbar label="View" tools={viewTools} className="mt-[17px] w-[468px]" />
          <Toolbar label="Edit" tools={editTools} className="ml-[31px] w-[586px]" />
        </div>

        <div className="relative mt-[19px] flex items-start justify-between pr-[9px] pl-2">
          <SideBar />
          <PanelList />
        </div>

        <div className="absolute bottom-[10px] left-1/2 h-2 w-1/4 -translate-x-1/2 rounded-full bg-[#101010]" />
      </section>
    </main>
  );
}
